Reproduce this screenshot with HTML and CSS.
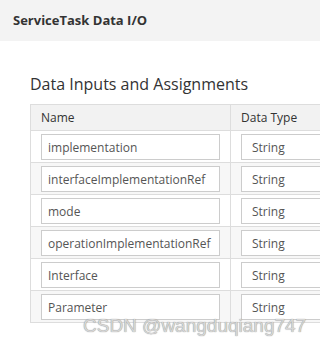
FILE: index.html
```html
<!DOCTYPE html>
<html lang="en">
<head>
    <meta charset="UTF-8">
    <meta name="viewport" content="width=device-width, initial-scale=1.0">
    <title>ServiceTask Data I/O</title>
    <link rel="stylesheet" href="styles.css">
</head>
<body>
    <div class="modal-header">ServiceTask Data I/O</div>

    <div class="modal-body">
        <h3 class="section-title">Data Inputs and Assignments</h3>
        <table class="io-table">
            <thead>
                <tr>
                    <th class="col-name">Name</th>
                    <th class="col-type">Data Type</th>
                </tr>
            </thead>
            <tbody>
                <tr>
                    <td><input class="field name-field" type="text" value="implementation"></td>
                    <td><input class="field type-field" type="text" value="String"></td>
                </tr>
                <tr>
                    <td><input class="field name-field" type="text" value="interfaceImplementationRef"></td>
                    <td><input class="field type-field" type="text" value="String"></td>
                </tr>
                <tr>
                    <td><input class="field name-field" type="text" value="mode"></td>
                    <td><input class="field type-field" type="text" value="String"></td>
                </tr>
                <tr>
                    <td><input class="field name-field" type="text" value="operationImplementationRef"></td>
                    <td><input class="field type-field" type="text" value="String"></td>
                </tr>
                <tr>
                    <td><input class="field name-field" type="text" value="Interface"></td>
                    <td><input class="field type-field" type="text" value="String"></td>
                </tr>
                <tr>
                    <td><input class="field name-field" type="text" value="Parameter"></td>
                    <td><input class="field type-field" type="text" value="String"></td>
                </tr>
            </tbody>
        </table>
    </div>

    <div class="watermark">CSDN @wangduqiang747</div>
</body>
</html>
```

FILE: styles.css
```css
body {
    margin: 0;
    font-family: "Open Sans", Arial, sans-serif;
    color: #333;
    background: #fff;
    overflow: hidden;
}
.modal-header {
    height: 41px;
    line-height: 41px;
    padding-left: 13px;
    background: #f3f3f3;
    font-size: 13px;
    font-weight: bold;
    color: #333;
}
.modal-body {
    padding-left: 30px;
    overflow: hidden;
}
.section-title {
    margin: 32px 0 9px;
    font-size: 16px;
    line-height: 22px;
    font-weight: normal;
    color: #333;
}
.io-table {
    border-collapse: collapse;
    table-layout: fixed;
    width: 420px;
    border: 1px solid #ddd;
}
.io-table th {
    height: 25px;
    padding: 0 10px;
    text-align: left;
    font-size: 12px;
    font-weight: normal;
    color: #333;
    background: #f2f2f2;
    border: 1px solid #ddd;
}
.col-name {
    width: 179px;
}
.io-table td {
    padding: 3px 10px 2px;
    border: 1px solid #ddd;
}
.io-table tbody tr:nth-child(even) {
    background: #f7f7f7;
}
.field {
    display: block;
    box-sizing: border-box;
    height: 26px;
    margin: 0;
    border: 1px solid #ccc;
    border-radius: 0;
    background: #fff;
    font-family: "Open Sans", Arial, sans-serif;
    font-size: 12px;
    color: #555;
}
.name-field {
    width: 179px;
    padding: 0 6px;
}
.type-field {
    width: 160px;
    padding: 0 10px;
}
.watermark {
    position: absolute;
    left: 83px;
    top: 315px;
    font-family: "Liberation Sans", Arial, sans-serif;
    font-size: 19px;
    color: #d6d6d6;
    text-shadow: 0 0 1px #777;
}
```
